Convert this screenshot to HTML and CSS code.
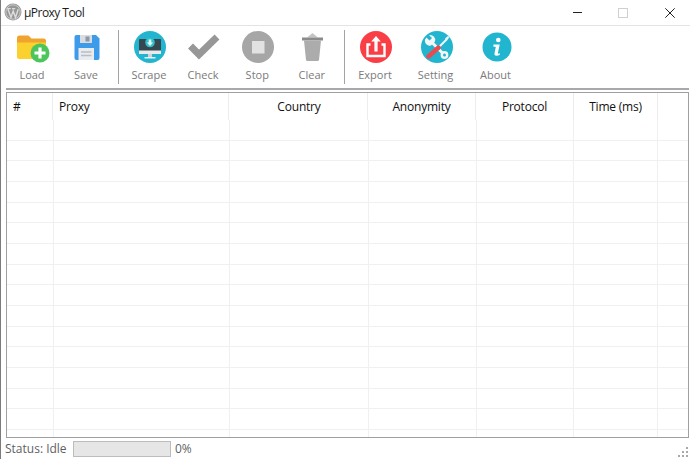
FILE: index.html
```html
<!DOCTYPE html>
<html lang="en">
<head>
<meta charset="utf-8">
<title>µProxy Tool</title>
<link rel="stylesheet" href="styles.css">
</head>
<body>
<div class="window">
  <header class="titlebar">
    <svg class="logo" viewBox="0 0 18 18"><circle cx="9" cy="9" r="8.500" fill="#979797"/><circle cx="9" cy="9" r="7.200" fill="none" stroke="#d6d6d6" stroke-width=".8"/><path d="M4 6.200 7 14.500 9.200 8l2.300 6.500 2.700-8.200M3.200 5.600h3.600M8 5.600h3.200" fill="none" stroke="#dcdcdc" stroke-width="1.400"/></svg>
    <span class="title">µProxy Tool</span>
    <div class="controls">
      <span class="ctl-min"></span>
      <span class="ctl-max"></span>
      <svg class="ctl-close" viewBox="0 0 10 10"><path d="M.3.3l9.400 9.400M9.700.3.300 9.700" stroke="#222" stroke-width="1" fill="none"/></svg>
    </div>
  </header>

  <nav class="toolbar">
    <div class="tool">
      <svg class="icon" viewBox="0 0 36 36"><path d="M3 9a2.500 2.500 0 0 1 2.500-2.500h9l3 3h12a2.500 2.500 0 0 1 2.500 2.500v3H3z" fill="#f0a32f"/><path d="M3 13.500h29V28a2 2 0 0 1-2 2H5a2 2 0 0 1-2-2z" fill="#fbd12f"/><circle cx="26" cy="24" r="9.500" fill="#4cc65a"/><path d="M26 18.500v11M20.500 24h11" stroke="#fff" stroke-width="3.200"/></svg>
      <span>Load</span>
    </div>
    <div class="tool">
      <svg class="icon" viewBox="0 0 36 36"><path d="M8.500 6h19.500l3.500 3.500V29a2 2 0 0 1-2 2h-21a2 2 0 0 1-2-2V8a2 2 0 0 1 2-2z" fill="#3d9be9"/><rect x="12" y="6" width="12" height="8" fill="#d9dde2"/><rect x="17.500" y="7.500" width="4" height="5" fill="#8d98a3"/><rect x="10.500" y="19" width="15.500" height="12" fill="#e9ecef"/><path d="M13 23h10.500M13 26.500h10.500" stroke="#b7bdc4" stroke-width="1.400"/></svg>
      <span>Save</span>
    </div>
    <div class="sep"></div>
    <div class="tool">
      <svg class="icon nudge" viewBox="0 0 36 36"><circle cx="18" cy="18" r="16" fill="#22b5cf"/><rect x="7" y="10" width="22" height="14" rx="1" fill="#37474f"/><rect x="7" y="21.500" width="22" height="3.500" fill="#e8eaec"/><path d="M16 25h4v3h-4z" fill="#cfd4d8"/><path d="M12.500 28h11v1.500h-11z" fill="#eef0f2"/><circle cx="18" cy="13.500" r="4.800" fill="#2fc0c9"/><path d="M16.700 10.500h2.600v3h1.800L18 17l-3.100-3.500h1.800z" fill="#e9fbfb"/></svg>
      <span>Scrape</span>
    </div>
    <div class="tool">
      <svg class="icon" viewBox="0 0 36 36"><path d="M5.500 17 14 25.500 32 8" fill="none" stroke="#979797" stroke-width="7"/></svg>
      <span>Check</span>
    </div>
    <div class="tool tool-mid">
      <svg class="icon nudge" viewBox="0 0 36 36"><circle cx="18" cy="18" r="16" fill="#a6a6a6"/><rect x="12" y="12" width="12.500" height="12.500" fill="#e2e2e2"/></svg>
      <span>Stop</span>
    </div>
    <div class="tool tool-mid">
      <svg class="icon" viewBox="0 0 36 36"><path d="M13 8.500 18.500 4l5.500 4.500z" fill="#c4c4c4"/><path d="M8 8.500h21v3H8z" fill="#8b8b8b"/><path d="M10 11.500h17l-2 19.500a1.500 1.500 0 0 1-1.500 1h-10a1.500 1.500 0 0 1-1.500-1z" fill="#acacac"/></svg>
      <span>Clear</span>
    </div>
    <div class="sep"></div>
    <div class="tool">
      <svg class="icon nudge" viewBox="0 0 36 36"><circle cx="18" cy="18" r="16" fill="#f93e45"/><path d="M12.500 15.500H9.500v11.500h17V15.500h-3" fill="none" stroke="#fff" stroke-width="2.400"/><path d="M16.400 22.500v-10h-3.200L18 7l4.800 5.500h-3.200v10z" fill="#fff"/></svg>
      <span>Export</span>
    </div>
    <div class="tool tool-wide tool-setting">
      <svg class="icon nudge" viewBox="0 0 36 36"><circle cx="18" cy="18" r="16" fill="#22b5cf"/><path d="M11.500 12 24 24.500" stroke="#f4f6f7" stroke-width="3"/><path d="M7.500 8.500 10.500 11.500 13 9 10 6.200a5 5 0 0 1 6 6.300l-4 4a5 5 0 0 1-6-6z" fill="#f4f6f7"/><circle cx="25.500" cy="26" r="3.900" fill="#f4f6f7"/><circle cx="25.500" cy="26" r="1.500" fill="#22b5cf"/><path d="M20 18 27.500 10.500" stroke="#f4f6f7" stroke-width="2"/><path d="M26 9.500 29 7l1.300 1.300L28 11.500z" fill="#f4f6f7"/><path d="M9.500 27.500 19.500 18.500" stroke="#e94b50" stroke-width="4.400" stroke-linecap="round"/></svg>
      <span>Setting</span>
    </div>
    <div class="tool tool-wide">
      <svg class="icon nudge" viewBox="0 0 36 36"><circle cx="18" cy="18" r="14.500" fill="#22b5cf"/><circle cx="19.300" cy="11" r="2.300" fill="#fff"/><path d="M14.500 15.500h6.200l-1.800 8.500c-.2 1 .6 1 2.100.3l-.4 1.700c-3 1.400-5.600 1.100-5.100-1.700l1.300-6.200-2.500-.6z" fill="#fff"/></svg>
      <span>About</span>
    </div>
  </nav>
  <div class="rule"></div>

  <main class="list">
    <div class="head">
      <div class="h c-num">#</div>
      <div class="h c-proxy">Proxy</div>
      <div class="h c-country ctr">Country</div>
      <div class="h c-anon ctr">Anonymity</div>
      <div class="h c-proto ctr">Protocol</div>
      <div class="h c-time ctr">Time (ms)</div>
    </div>
    <div class="rows">
      <div class="row"><i></i><i></i><i></i><i></i><i></i><i></i></div>
      <div class="row"><i></i><i></i><i></i><i></i><i></i><i></i></div>
      <div class="row"><i></i><i></i><i></i><i></i><i></i><i></i></div>
      <div class="row"><i></i><i></i><i></i><i></i><i></i><i></i></div>
      <div class="row"><i></i><i></i><i></i><i></i><i></i><i></i></div>
      <div class="row"><i></i><i></i><i></i><i></i><i></i><i></i></div>
      <div class="row"><i></i><i></i><i></i><i></i><i></i><i></i></div>
      <div class="row"><i></i><i></i><i></i><i></i><i></i><i></i></div>
      <div class="row"><i></i><i></i><i></i><i></i><i></i><i></i></div>
      <div class="row"><i></i><i></i><i></i><i></i><i></i><i></i></div>
      <div class="row"><i></i><i></i><i></i><i></i><i></i><i></i></div>
      <div class="row"><i></i><i></i><i></i><i></i><i></i><i></i></div>
      <div class="row"><i></i><i></i><i></i><i></i><i></i><i></i></div>
      <div class="row"><i></i><i></i><i></i><i></i><i></i><i></i></div>
      <div class="row"><i></i><i></i><i></i><i></i><i></i><i></i></div>
      <div class="row row-last"><i></i><i></i><i></i><i></i><i></i><i></i></div>
    </div>
  </main>

  <footer class="status">
    <span class="status-text">Status: Idle</span>
    <div class="progress"></div>
    <span class="pct">0%</span>
    <svg class="grip" viewBox="0 0 10 10"><path d="M8 0h2v2H8zM4 4h2v2H4zM8 4h2v2H8zM0 8h2v2H0zM4 8h2v2H4zM8 8h2v2H8z" fill="#a9a9a9"/></svg>
  </footer>
</div>
</body>
</html>
```
FILE: styles.css
```css
* { box-sizing: border-box; }
html, body { margin: 0; padding: 0; }
body {
  width: 690px;
  height: 459px;
  overflow: hidden;
  background: #fff;
  font-family: "Open Sans", "Noto Sans", sans-serif;
  font-size: 12px;
}
.window {
  width: 690px;
  height: 459px;
  display: flex;
  flex-direction: column;
  background: #fff;
  border-left: 1px solid #7b7b7b;
}
.titlebar {
  height: 26px;
  flex: none;
  display: flex;
  align-items: center;
  border-bottom: 1px solid #e3e3e3;
  padding-left: 3px;
}
.logo { width: 18px; height: 18px; flex: none; margin-top: -2px; }
.title {
  margin-left: 2px;
  font-size: 12px;
  letter-spacing: -0.55px;
  color: #1c1c1c;
}
.controls {
  margin-left: auto;
  display: flex;
  align-items: center;
  height: 100%;
}
.ctl-min {
  width: 9px;
  height: 1px;
  background: #222;
  margin-right: 36px;
}
.ctl-max {
  width: 10px;
  height: 10px;
  border: 1px solid #d0d0d0;
  margin-right: 37px;
}
.ctl-close { width: 10px; height: 10px; margin-right: 15px; }
.toolbar {
  height: 62px;
  flex: none;
  display: flex;
  align-items: flex-start;
  padding-left: 4px;
}
.tool {
  width: 54px;
  height: 62px;
  flex: none;
  display: flex;
  flex-direction: column;
  align-items: center;
  padding-top: 3px;
  color: #7a7a7a;
  font-size: 11px;
  line-height: 15px;
}
.tool-mid { width: 54.500px; }
.tool-wide { width: 60px; }
.tool-setting { margin-left: 3.500px; }
.tool span { margin-top: 2px; }
.icon { width: 36px; height: 36px; flex: none; }
.icon.nudge { margin-left: 2px; }
.sep {
  width: 1px;
  height: 54px;
  margin: 4px 3px 0 5px;
  flex: none;
  background: #a3a3a3;
}
.rule {
  height: 2px;
  flex: none;
  margin: 0 1px 0 5px;
  background: #a6a8ac;
}
.list {
  height: 346px;
  flex: none;
  margin: 2px 1px 0 5px;
  border: 1px solid #a0a0a0;
  overflow: hidden;
}
.head {
  display: flex;
  height: 27px;
  color: #111;
  font-size: 12px;
  letter-spacing: -0.2px;
}
.h {
  height: 100%;
  padding-top: 5px;
  line-height: 18px;
  border-right: 1px solid #ececec;
  flex: none;
}
.ctr { text-align: center; }
.c-num { width: 46px; padding-left: 6px; }
.c-proxy { width: 176px; padding-left: 6px; }
.c-country { width: 139px; padding-left: 2px; }
.c-anon { width: 108px; }
.c-proto { width: 98px; }
.c-time { width: 84px; }
.rows { height: 317px; overflow: hidden; }
.row {
  display: flex;
  height: 20.670px;
  border-bottom: 1px solid #f0f0f0;
}
.row-last { border-bottom: 0; height: 7px; }
.row i {
  display: block;
  flex: none;
  height: 100%;
  border-right: 1px solid #f0f0f0;
}
.row i:nth-child(1) { width: 47px; }
.row i:nth-child(2) { width: 176px; }
.row i:nth-child(3) { width: 139px; }
.row i:nth-child(4) { width: 108px; }
.row i:nth-child(5) { width: 97px; }
.row i:nth-child(6) { width: 84px; }
.status {
  flex: 1;
  display: flex;
  align-items: center;
  position: relative;
  padding-left: 4px;
  color: #5f5f5f;
  font-size: 12px;
}
.status-text { width: 68px; flex: none; }
.progress {
  width: 98px;
  height: 16px;
  flex: none;
  background: #e6e6e6;
  border: 1px solid #bcbcbc;
}
.pct { margin-left: 4px; }
.grip {
  position: absolute;
  right: 2px;
  bottom: 2px;
  width: 10px;
  height: 10px;
}
```
